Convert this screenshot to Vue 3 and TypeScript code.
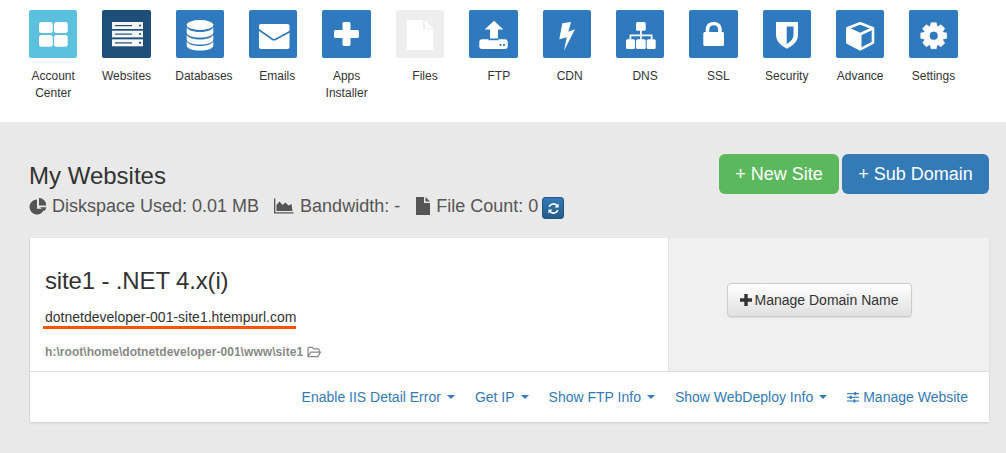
<script setup lang="ts">
interface NavItem { label: string[]; bg: string; paths: string; shift?: number; }
const white = 'fill="#fff"';

function gearPath(cx: number, cy: number): string {
  const teeth = 8;
  const outer = 13.2;
  const root = 9.8;
  const pts: string[] = [];
  for (let i = 0; i < teeth; i++) {
    const c = (i / teeth) * Math.PI * 2 - Math.PI / 2;
    const steps: [number, number][] = [[-0.36, root], [-0.2, outer], [0.2, outer], [0.36, root]];
    for (const [a, r] of steps) {
      pts.push(`${(cx + Math.cos(c + a) * r).toFixed(2)} ${(cy + Math.sin(c + a) * r).toFixed(2)}`);
    }
  }
  const h = 4;
  return `M${pts.join('L')}zM${cx - h} ${cy}a${h} ${h} 0 1 0 ${2 * h} 0a${h} ${h} 0 1 0 ${-2 * h} 0z`;
}

const items: NavItem[] = [
  { label: ['Account', 'Center'], bg: '#5bc0de', paths: `<rect x="10" y="12" width="13.700" height="11" rx="2.500" ${white}/><rect x="25" y="12" width="13.700" height="11" rx="2.500" ${white}/><rect x="10" y="25" width="13.700" height="11.700" rx="2.500" ${white}/><rect x="25" y="25" width="13.700" height="11.700" rx="2.500" ${white}/>` },
  { label: ['Websites'], bg: '#1f4e79', paths: `<g fill="#f4f6f8"><rect x="10" y="12" width="31" height="7"/><rect x="10" y="20.700" width="31" height="6.700"/><rect x="10" y="29.300" width="31" height="7"/></g><g fill="#1f4e79"><rect x="13" y="15" width="17" height="1.200"/><rect x="13" y="23.500" width="17" height="1.200"/><rect x="13" y="32.300" width="17" height="1.200"/><circle cx="38" cy="15.500" r="1.100"/><circle cx="38" cy="24" r="1.100"/><circle cx="38" cy="32.800" r="1.100"/></g>` },
  { label: ['Databases'], bg: '#2f79bf', shift: 4, paths: `<g fill="#fff"><ellipse cx="24" cy="15" rx="13.300" ry="5"/><path d="M10.700 17.500c2 3 7 4.500 13.300 4.500s11.300-1.500 13.300-4.500v5c0 3-6 5-13.300 5s-13.300-2-13.300-5z"/><path d="M10.700 25c2 3 7 4.500 13.300 4.500s11.300-1.500 13.300-4.500v4.500c0 3-6 5-13.300 5s-13.300-2-13.300-5z"/><path d="M10.700 31.500c2 3 7 4.500 13.300 4.500s11.300-1.500 13.300-4.500v4c0 3-6 5-13.300 5s-13.300-2-13.300-5z"/></g>` },
  { label: ['Emails'], bg: '#2f79bf', shift: 4, paths: `<rect x="10" y="14" width="30.500" height="25" rx="2" fill="#fff"/><path fill="none" stroke="#2f79bf" stroke-width="1.600" stroke-linejoin="round" d="M9.500 19.500l13.500 9.500c1.300.9 3 .9 4.300 0l13.700-7.500"/>` },
  { label: ['Apps', 'Installer'], bg: '#2f79bf', paths: `<path fill="#fff" d="M20.500 13.500c0-.8.700-1.500 1.500-1.500h5c.8 0 1.500.7 1.500 1.500V20h7c.8 0 1.500.7 1.500 1.500v5c0 .8-.7 1.500-1.500 1.500h-7v6.500c0 .8-.7 1.500-1.500 1.500h-5c-.8 0-1.500-.7-1.500-1.500V28h-7c-.8 0-1.500-.7-1.500-1.500v-5c0-.8.700-1.500 1.500-1.500h7z"/>` },
  { label: ['Files'], bg: '#eeeeee', shift: 5, paths: `<path fill="#fff" d="M10.700 10H27v9h10.300v21H10.700z"/><path fill="#fff" d="M29 10.500l8 7.500h-8z"/>` },
  { label: ['FTP'], bg: '#2f79bf', shift: 5.5, paths: `<path fill="#fff" d="M25 10.700l9.300 8.800h-5.300v9h-8v-9h-5.300z"/><path fill="#fff" d="M10.300 32c0-1.500 1-2.700 2.500-2.700h6.700v1h10v-1h6.700c1.500 0 2.500 1.200 2.500 2.700v4.500c0 1.500-1 2.500-2.500 2.500h-23.400c-1.500 0-2.500-1-2.500-2.500z"/><rect x="30.500" y="34" width="2" height="1.800" fill="#2f79bf"/><rect x="34" y="34" width="2" height="1.800" fill="#2f79bf"/>` },
  { label: ['CDN'], bg: '#2f79bf', shift: 3, paths: `<path fill="#fff" d="M19.300 13.300L28 12l-2.700 9.700 6.700-2.400-11 21.400 2.700-13.400-7.400 2z"/>` },
  { label: ['DNS'], bg: '#2f79bf', shift: 5, paths: `<g fill="#fff"><rect x="20" y="12" width="9.700" height="8.700" rx="1.500"/><rect x="10" y="29.300" width="9" height="9.700" rx="1.500"/><rect x="20" y="29.300" width="9.700" height="9.700" rx="1.500"/><rect x="30.700" y="29.300" width="9" height="9.700" rx="1.500"/><rect x="24" y="20" width="1.800" height="9.500"/><path d="M13.500 29.500v-5h23v5h-1.800v-3.200h-19.400v3.200z"/></g>` },
  { label: ['SSL'], bg: '#2f79bf', shift: 5, paths: `<path fill="#fff" fill-rule="evenodd" d="M16.800 22v-3c0-4.800 3.500-7 7.900-7s8 2.200 8 7v3h.8c.8 0 1.500.7 1.500 1.500v11c0 .8-.7 1.500-1.500 1.500H15.800c-.8 0-1.500-.7-1.500-1.500v-11c0-.8.700-1.500 1.500-1.500zm3.500 0h8.800v-3c0-2.500-2-3.800-4.400-3.800s-4.400 1.300-4.400 3.800z"/>` },
  { label: ['Security'], bg: '#2f79bf', paths: `<path fill="#fff" fill-rule="evenodd" d="M13 12h22v13c0 6.500-5.500 11-11 13.700C18.500 36 13 31.500 13 25zM23.700 16.500v17.500c3.500-2 6.800-5 6.800-9v-8.500z"/>` },
  { label: ['Advance'], bg: '#2f79bf', paths: `<path fill="none" stroke="#fff" stroke-width="2.600" stroke-linejoin="round" d="M24.200 13.300L37 18.300v14.300L24.200 39.400 11.300 32.600V18.300z"/><path fill="#fff" d="M11.300 18.300l12.900 6v15.100l-12.900-6.800z"/><path fill="none" stroke="#fff" stroke-width="2.600" d="M11.300 18.300l12.900 6 12.800-6M24.200 24.300v15"/>` },
  { label: ['Settings'], bg: '#2f79bf', paths: `<path fill="#fff" fill-rule="evenodd" stroke="#fff" stroke-width=".6" stroke-linejoin="round" d="${gearPath(24.7, 25.7)}"/><circle cx="24.700" cy="25.700" r="3.900" fill="#2f79bf"/>` },
];
const links: string[] = ['Enable IIS Detail Error', 'Get IP', 'Show FTP Info', 'Show WebDeploy Info'];
</script>

<template>
  <div class="page">
    <nav class="top">
      <a v-for="item in items" :key="item.label.join()" class="tile">
        <span class="square" :style="{ background: item.bg }">
          <svg viewBox="0 0 48 48" width="48" height="48" v-html="item.paths"></svg>
        </span>
        <span class="name" :style="{ paddingLeft: `${(item.shift ?? 0) * 2}px` }"><span v-for="l in item.label" :key="l" class="line">{{ l }}</span></span>
      </a>
    </nav>

    <main class="main">
      <header class="head">
        <div>
          <h1>My Websites</h1>
          <div class="stats">
            <span class="stat pie">
              <svg viewBox="0 0 18 18" width="18" height="18"><path fill="#555" d="M8 2.500a7.500 7.500 0 1 0 7.300 9.200H8z"/><path fill="#555" d="M10 .8a7.500 7.500 0 0 1 7.200 7.700H10z"/><path fill="#555" d="M11 10.300h6.300a7 7 0 0 1-1.800 3.800z"/></svg>
              <span>Diskspace Used: 0.01 MB</span>
            </span>
            <span class="stat area">
              <svg viewBox="0 0 20 18" width="20" height="18"><path fill="#555" d="M0 1.500h1.300v13.700H19.500v1.300H0z"/><path fill="#555" d="M2.500 14V8l3-3.500 3 3.500 3-2.500 3 3 3-1.500 1 7z"/></svg>
              <span>Bandwidth: -</span>
            </span>
            <span class="stat file">
              <svg viewBox="0 0 16 18" width="16" height="18"><path fill="#555" d="M1 0h8v6h6v12H1z"/><path fill="#555" d="M10.500 0L15 4.500h-4.500z"/></svg>
              <span>File Count: 0</span>
            </span>
            <button class="refresh" type="button" aria-label="Refresh">
              <svg viewBox="0 0 14 14" width="13" height="13"><path fill="#fff" d="M12.500 1.500v4.300H8.200l1.700-1.700A4 4 0 0 0 3.300 5.500L1.500 5A5.800 5.800 0 0 1 11.100 2.900zM1.500 12.500V8.200h4.300L4.100 9.900a4 4 0 0 0 6.600-1.400l1.800.5a5.800 5.800 0 0 1-9.600 2.100z"/></svg>
            </button>
          </div>
        </div>
        <div class="actions">
          <button class="big green" type="button">+ New Site</button>
          <button class="big blue" type="button">+ Sub Domain</button>
        </div>
      </header>

      <section class="card">
        <div class="upper">
          <div class="info">
            <h2>site1 - .NET 4.x(i)</h2>
            <div class="url"><span>dotnetdeveloper-001-site1.htempurl.com</span></div>
            <div class="path">
              <span>h:\root\home\dotnetdeveloper-001\www\site1</span>
              <svg viewBox="0 0 16 14" width="15" height="13"><path fill="none" stroke="#888" stroke-width="1.300" stroke-linejoin="round" d="M1 11.500V2.500c0-.6.400-1 1-1h3.500l1.500 1.700h5c.6 0 1 .4 1 1v2M1 11.500h10.500l3-5H4z"/></svg>
            </div>
          </div>
          <aside class="side">
            <button class="manage" type="button">
              <svg viewBox="0 0 12 12" width="12" height="12"><path fill="#333" d="M4.300 0h3.400v4.300H12v3.400H7.700V12H4.300V7.700H0V4.300h4.300z"/></svg>
              <span>Manage Domain Name</span>
            </button>
          </aside>
        </div>
        <footer class="foot">
          <a v-for="l in links" :key="l" class="link">{{ l }}<i class="caret"></i></a>
          <a class="link plain">
            <svg viewBox="0 0 14 12" width="13" height="11"><g fill="#337ab7"><rect x="0" y="1.200" width="13" height="1.200"/><rect x="0" y="5.200" width="13" height="1.200"/><rect x="0" y="9.200" width="13" height="1.200"/><rect x="8" y="0" width="2" height="3.600"/><rect x="3" y="4" width="2" height="3.600"/><rect x="7" y="8" width="2" height="3.600"/></g></svg>
            <span>Manage Website</span>
          </a>
        </footer>
      </section>
    </main>
  </div>
</template>

<style>
html, body { margin: 0; background: #e9e9e9; }
</style>

<style scoped>
.page {
  width: 1006px;
  height: 453px;
  overflow: hidden;
  font-family: "Liberation Sans", Arial, sans-serif;
  background: #e9e9e9;
  color: #333;
}
.top {
  display: flex;
  height: 122px;
  padding: 10px 0 0 16.530px;
  box-sizing: border-box;
  background: #fff;
}
.tile {
  width: 73.360px;
  flex: none;
  display: flex;
  flex-direction: column;
  align-items: center;
}
.square {
  width: 48.400px;
  height: 48px;
  border-radius: 2px;
  display: block;
}
.square svg { display: block; }
.name {
  margin-top: 10px;
  font-size: 12px;
  line-height: 17px;
  text-align: center;
  color: #333;
}
.line { display: block; }
.main { padding: 32px 17px 0 29px; }
.head {
  display: flex;
  justify-content: space-between;
  height: 84px;
}
h1 {
  margin: 9px 0 0;
  font-size: 24px;
  line-height: 26px;
  font-weight: 400;
  color: #333;
}
.stats {
  display: flex;
  align-items: center;
  margin-top: 4px;
  font-size: 18px;
  line-height: 24px;
  color: #555;
}
.stat {
  display: inline-flex;
  align-items: center;
  margin-right: 15px;
}
.pie { gap: 5px; }
.area { gap: 6px; }
.file { gap: 5px; margin-right: 4px; }
.refresh {
  width: 22px;
  height: 22px;
  margin-top: 4px;
  padding: 0;
  border: 1px solid #245580;
  border-radius: 3px;
  background: linear-gradient(#337ab7, #265a88);
  display: flex;
  align-items: center;
  justify-content: center;
}
.actions { display: flex; gap: 3px; align-items: flex-start; }
.big {
  height: 40px;
  border: 0;
  border-radius: 6px;
  font: 18px/24px "Liberation Sans", Arial, sans-serif;
  color: #fff;
  padding: 0;
}
.green { width: 120px; background: #5cb85c; }
.blue { width: 147px; background: #337ab7; }
.card {
  width: 959px;
  margin-left: 1px;
  background: #fff;
  box-shadow: 0 1px 2px rgba(0, 0, 0, 0.12), -1px 0 0 #e2e2e2;
}
.upper { display: flex; height: 133px; }
.info {
  width: 639px;
  box-sizing: border-box;
  padding: 29px 0 0 15px;
  border-right: 1px solid #e0e0e0;
}
h2 {
  margin: 0;
  font-size: 24px;
  line-height: 28px;
  font-weight: 400;
  letter-spacing: -0.15px;
  color: #333;
}
.url { margin-top: 13px; font-size: 14px; line-height: 18px; color: #333; }
.url span {
  display: inline-block;
  margin-left: -2px;
  padding: 0 0 0 2px;
  border-bottom: 3px solid #f50;
  line-height: 17px;
}
.path {
  margin-top: 15px;
  font-size: 12px;
  line-height: 16px;
  font-weight: 700;
  letter-spacing: 0.05px;
  color: #888;
  display: flex;
  align-items: center;
  gap: 4px;
}
.side {
  flex: 1;
  background: #f0f0f0;
  display: flex;
  justify-content: center;
  align-items: center;
  padding: 0 20px 10px 0;
}
.manage {
  display: flex;
  align-items: center;
  gap: 3px;
  height: 34px;
  width: 185px;
  padding: 0;
  justify-content: center;
  border: 1px solid #ccc;
  border-radius: 4px;
  background: linear-gradient(#fff, #e0e0e0);
  font: 14px/20px "Liberation Sans", Arial, sans-serif;
  color: #333;
  box-shadow: 0 1px 1px rgba(0, 0, 0, 0.08);
}
.foot {
  display: flex;
  justify-content: flex-end;
  align-items: center;
  gap: 20px;
  height: 50px;
  padding-right: 21px;
  border-top: 1px solid #ddd;
  font-size: 14px;
  color: #337ab7;
}
.link { display: inline-flex; align-items: center; }
.plain { gap: 3px; }
.caret {
  width: 0;
  height: 0;
  margin-left: 6px;
  border-top: 4px solid #337ab7;
  border-left: 4px solid transparent;
  border-right: 4px solid transparent;
}
</style>
